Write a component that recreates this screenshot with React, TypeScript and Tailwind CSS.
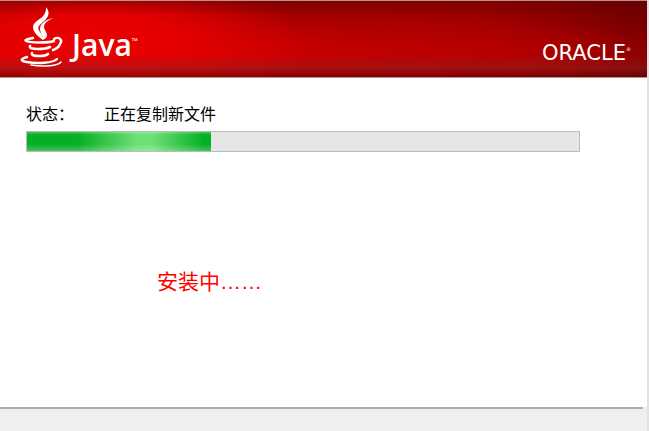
function JavaCup() {
  return (
    <svg viewBox="0 0 44 60" className="h-[60px] w-11 shrink-0" fill="#fff" aria-hidden="true">
      <path d="M26 0C31 6 28 11 23 15C18 19 17 21 20 25C22 28 24 30 23 33C20 31 13 26 13 20C13 14 23 12 25 6C26 4 26 2 26 0Z" />
      <path d="M34 11C28 13 24 16 24 20C24 23 27 25 27 28C27 30 26 31 23 33C24 29 20 26 20 22C20 16 27 12 34 11Z" />
      <g fill="none" stroke="#fff" strokeLinecap="round">
        <path d="M13 31C7 32 4 33 6 34C11 36 28 36 34 34" strokeWidth="2.4" />
        <path d="M34 32C39 29 43 33 40 37C39 40 36 42 33 43" strokeWidth="2.4" />
        <path d="M10 39C9 41 12 42 18 42C24 42 28 41 30 40" strokeWidth="2.6" />
        <path d="M12 46C11 48 14 49 19 49C24 49 27 48 28 47" strokeWidth="2.6" />
        <path d="M7 50C0 52 0 54 7 55C17 57 33 56 37 52" strokeWidth="2.4" />
        <path d="M11 58C24 60 38 59 41 55" strokeWidth="1.5" />
      </g>
    </svg>
  );
}

function Banner() {
  return (
    <header className="flex h-[78px] items-start justify-between border-y border-[#b89090] bg-[linear-gradient(180deg,rgba(90,0,0,0.35)_0%,transparent_18%,transparent_70%,rgba(130,40,40,0.4)_88%,rgba(90,0,0,0.55)_100%),radial-gradient(ellipse_220px_75px_at_90px_46px,#ee0000_0%,#e20000_45%,transparent_100%),radial-gradient(ellipse_480px_55px_at_200px_56px,#cc0000_0%,#c00000_35%,transparent_100%),radial-gradient(ellipse_260px_50px_at_480px_54px,#aa0000_0%,transparent_100%),linear-gradient(90deg,#980000_0%,#920000_75%,#700000_100%)] pr-4 pl-5 text-white">
      <div className="flex pt-[6px]">
        <JavaCup />
        <div className="flex pt-5 pl-2 font-['Open_Sans','Noto_Sans',sans-serif]">
          <span className="text-[30px] leading-9 font-semibold">Java</span>
          <span className="pt-2 text-[8px] leading-3">™</span>
        </div>
      </div>
      <div className="flex pt-10 font-['DejaVu_Sans',sans-serif]">
        <span className="text-[21px] leading-6">ORACLE</span>
        <span className="pt-1 text-[5px] leading-2">®</span>
      </div>
    </header>
  );
}

function Progress({ value }: { value: number }) {
  return (
    <div
      role="progressbar"
      aria-labelledby="status"
      aria-valuemin={0}
      aria-valuemax={100}
      aria-valuenow={value}
      className="h-[21px] border border-[#bcbcbc] bg-[#e6e6e6]"
    >
      <div
        className="h-full bg-[linear-gradient(180deg,rgba(255,255,255,0.25)_0%,transparent_15%,transparent_65%,rgba(255,255,255,0.25)_100%),linear-gradient(90deg,#06b025_0%,#06b025_28%,#6ee076_60%,#6ee076_68%,#06b025_96%)]"
        style={{ width: `${value}%` }}
      />
    </div>
  );
}

export default function App() {
  return (
    <div className="flex min-h-screen flex-col border-r-2 border-[#e2e2e2] bg-white font-['Liberation_Sans','Noto_Sans_CJK_SC',sans-serif]">
      <Banner />
      <main className="flex-1 pt-[25px] pr-[67px] pl-[26px]">
        <div id="status" className="mb-1 flex text-[16px] leading-6 text-black">
          <span className="w-[78px]">状态：</span>
          <span>正在复制新文件</span>
        </div>
        <Progress value={33.3} />
        <p className="pt-[114px] pl-[131px] text-[21px] leading-8 text-[#ff0000]">安装中……</p>
      </main>
      <footer className="h-6 bg-[#efefef]">
        <div className="mr-1 h-[2px] bg-[#aeaeae]" />
      </footer>
    </div>
  );
}
